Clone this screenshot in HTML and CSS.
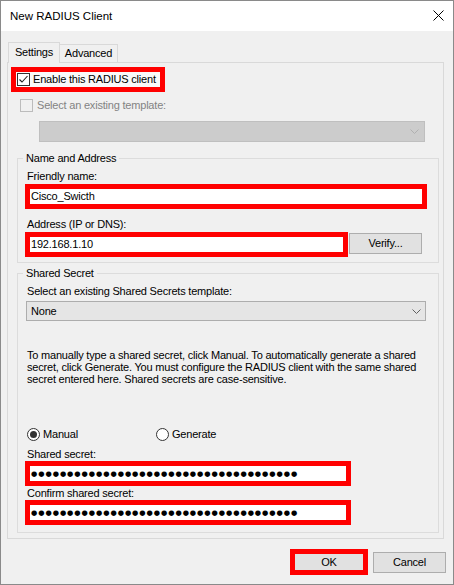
FILE: index.html
```html
<!DOCTYPE html>
<html>
<head>
<meta charset="utf-8">
<link rel="stylesheet" href="styles.css">
</head>
<body>
<div class="window">
  <div class="titlebar">
    <span class="title">New RADIUS Client</span>
    <svg class="close" width="11" height="11" viewBox="0 0 11 11"><path d="M0.5 0.5L10.5 10.5M10.5 0.5L0.5 10.5" stroke="#000" stroke-width="1" fill="none"/></svg>
  </div>
  <div class="client">
    <div class="tabs">
      <div class="tab active">Settings</div>
      <div class="tab inactive">Advanced</div>
    </div>
    <div class="panel">
      <div class="hl-check">
        <span class="checkbox">
          <svg width="11" height="11" viewBox="0 0 11 11"><path d="M1.5 5.5L4 8L9.5 2" stroke="#222" stroke-width="1.1" fill="none"/></svg>
        </span>
        <span class="check-label">Enable this RADIUS client</span>
      </div>
      <div class="check-row disabled">
        <span class="checkbox off"></span>
        <span class="check-label">Select an existing template:</span>
      </div>
      <div class="combo combo-disabled">
        <span class="combo-text"></span>
        <svg class="chev" width="9" height="5" viewBox="0 0 9 5"><path d="M0.5 0.5L4.5 4.5L8.5 0.5" stroke="#b0b0b0" fill="none"/></svg>
      </div>

      <fieldset class="group group-name">
        <legend>Name and Address</legend>
        <div class="label first">Friendly name:</div>
        <div class="hl-field name-field"><span class="field-text">Cisco_Swicth</span></div>
        <div class="label gap">Address (IP or DNS):</div>
        <div class="addr-row">
          <div class="hl-field addr-field"><span class="field-text">192.168.1.10</span></div>
          <div class="btn verify">Verify...</div>
        </div>
      </fieldset>

      <fieldset class="group group-secret">
        <legend>Shared Secret</legend>
        <div class="label first">Select an existing Shared Secrets template:</div>
        <div class="combo combo-none">
          <span class="combo-text">None</span>
          <svg class="chev" width="9" height="5" viewBox="0 0 9 5"><path d="M0.5 0.5L4.5 4.5L8.5 0.5" stroke="#606060" fill="none"/></svg>
        </div>
        <p class="info">To manually type a shared secret, click Manual. To automatically generate a shared<br>secret, click Generate. You must configure the RADIUS client with the same shared<br>secret entered here. Shared secrets are case-sensitive.</p>
        <div class="radio-row">
          <div class="radio-item manual"><span class="radio on"></span><span>Manual</span></div>
          <div class="radio-item"><span class="radio"></span><span>Generate</span></div>
        </div>
        <div class="label secret-label">Shared secret:</div>
        <div class="hl-field pw-field"><span class="dots">●●●●●●●●●●●●●●●●●●●●●●●●●●●●●●●●●●●●●</span></div>
        <div class="label confirm-label">Confirm shared secret:</div>
        <div class="hl-field pw-field"><span class="dots">●●●●●●●●●●●●●●●●●●●●●●●●●●●●●●●●●●●●●</span></div>
      </fieldset>
    </div>
    <div class="buttons">
      <div class="hl-btn"><div class="btn ok">OK</div></div>
      <div class="btn cancel">Cancel</div>
    </div>
  </div>
</div>
</body>
</html>
```

FILE: styles.css
```css
* { box-sizing: border-box; }
html, body { margin: 0; padding: 0; background: #f0f0f0; }
body {
  font-family: "Liberation Sans", Arial, sans-serif;
  font-size: 11px;
  line-height: 13px;
  letter-spacing: -0.2px;
  color: #000;
}
.window {
  width: 454px;
  height: 585px;
  border: 1px solid #8a8a8a;
  background: #f0f0f0;
  display: flex;
  flex-direction: column;
}
.titlebar {
  height: 30px;
  background: #fff;
  display: flex;
  align-items: center;
  justify-content: space-between;
  padding: 0 9px 0 9px;
}
.title {
  font-size: 11.5px;
  line-height: 14px;
  letter-spacing: 0;
  color: #000;
}
.close { display: block; margin-top: -1px; }
.client {
  padding: 11px 9px 0 6px;
  flex: 1;
}
.tabs {
  display: flex;
  align-items: flex-end;
  margin-left: 1px;
  height: 20px;
}
.tab {
  text-align: center;
  border: 1px solid #d9d9d9;
  border-bottom: none;
  background: #f0f0f0;
}
.tab.active {
  width: 52px;
  height: 21px;
  padding-top: 3px;
  margin-bottom: -1px;
  position: relative;
  z-index: 1;
}
.tab.inactive {
  width: 58px;
  height: 18px;
  padding-top: 2px;
  border-left: none;
}
.panel {
  border: 1px solid #d9d9d9;
  background: #f0f0f0;
  padding: 0 4px 5px 0;
}
.hl-check {
  display: inline-flex;
  align-items: center;
  margin: 4px 0 0 3px;
  border: 5px solid #ff0000;
  height: 25px;
  width: 154px;
  padding: 0 0 0 1px;
  background: #f9f9f9;
  vertical-align: top;
}
.checkbox {
  width: 13px;
  height: 13px;
  border: 1px solid #333;
  background: #fff;
  display: inline-flex;
  align-items: center;
  justify-content: center;
  flex: none;
}
.checkbox.off {
  border-color: #bcbcbc;
  background: #f0f0f0;
}
.check-label { margin-left: 3px; white-space: nowrap; }
.check-row {
  display: flex;
  align-items: center;
  margin: 7px 0 0 12px;
  height: 13px;
}
.check-row .check-label { margin-left: 4px; }
.disabled { color: #838383; }
.combo {
  display: flex;
  align-items: center;
  justify-content: space-between;
  border: 1px solid #adadad;
  background: #e5e5e5;
}
.combo-disabled {
  margin: 9px 0 0 31px;
  width: 386px;
  height: 21px;
  background: #cccccc;
  border-color: #bfbfbf;
  padding-right: 5px;
}
.combo-none {
  margin: 3px 0 0 1px;
  width: 400px;
  height: 20px;
  padding: 0 4px 0 4px;
}
.chev { display: block; }
.group {
  margin: 10px 0 0 9px;
  border: 1px solid #dcdcdc;
  padding: 0 0 5px 7px;
  min-width: 0;
}
.group legend {
  margin-left: -2px;
  padding: 0 3px;
  line-height: 13px;
}
.group-secret { margin-top: 4px; padding-bottom: 7px; }
.label { margin-left: 2px; height: 13px; }
.label.first { margin-top: 5px; }
.group-name .label { margin-bottom: 1px; }
.label.gap { margin-top: 9px; }
.hl-field {
  border: 5px solid #ff0000;
  background: #fff;
  height: 25px;
  display: flex;
  align-items: center;
  padding-left: 1px;
}
.name-field { width: 402px; }
.addr-row {
  display: flex;
  align-items: flex-start;
}
.addr-field { width: 323px; }
.btn {
  background: #e1e1e1;
  border: 1px solid #adadad;
  display: flex;
  align-items: center;
  justify-content: center;
}
.verify {
  width: 73px;
  height: 21px;
  margin: 1px 0 0 1px;
}
.info {
  margin: 28px 0 0 2px;
  line-height: 12px;
  width: 410px;
  white-space: nowrap;
}
.radio-row {
  display: flex;
  align-items: center;
  margin: 43px 0 0 2px;
  height: 13px;
}
.radio-item { display: flex; align-items: center; }
.radio-item span:last-child { margin-left: 3px; }
.manual { width: 129px; }
.radio {
  width: 13px;
  height: 13px;
  border: 1px solid #333;
  border-radius: 50%;
  background: #fff;
  display: flex;
  align-items: center;
  justify-content: center;
}
.radio.on::after {
  content: "";
  width: 7px;
  height: 7px;
  border-radius: 50%;
  background: #333;
}
.secret-label { margin-top: 7px; }
.confirm-label { margin-top: 1px; }
.pw-field { width: 326px; }
.dots {
  font-family: "DejaVu Sans", sans-serif;
  font-size: 7.2px;
  letter-spacing: 0.95px;
  line-height: 13px;
  color: #000;
  white-space: nowrap;
}
.buttons {
  display: flex;
  justify-content: flex-end;
  align-items: center;
  margin-top: 10px;
  margin-right: -2px;
}
.hl-btn {
  border: 5px solid #ff0000;
  width: 78px;
  height: 26px;
  background: #e1e1e1;
  margin-right: 5px;
}
.hl-btn .btn { width: 100%; height: 100%; border: none; }
.cancel { width: 73px; height: 21px; }
```
